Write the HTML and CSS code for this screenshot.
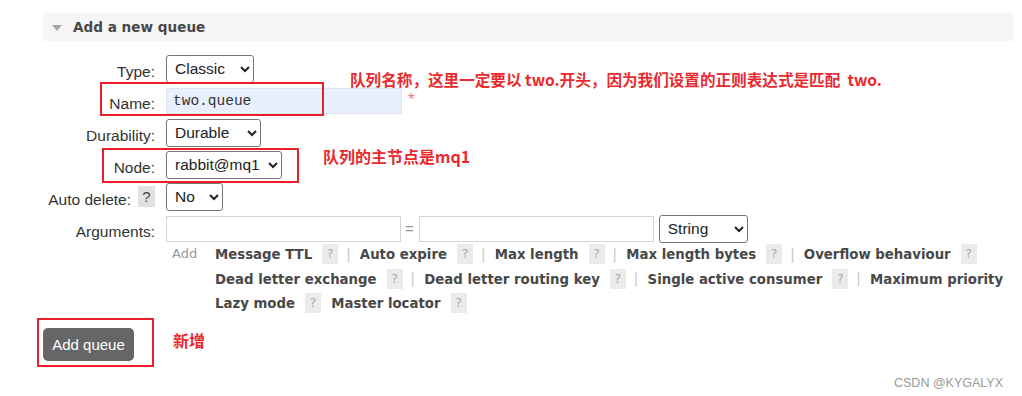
FILE: index.html
```html
<!DOCTYPE html>
<html lang="en">
<head>
    <meta charset="UTF-8">
    <meta name="viewport" content="width=device-width, initial-scale=1.0">
    <title>Add a new queue</title>
    <link rel="stylesheet" href="styles.css">
</head>
<body>

<div class="section">
    <div class="section-head"><span class="toggle"></span>Add a new queue</div>

    <form class="queue-form">
        <div class="row">
            <label class="label" for="type">Type:</label>
            <select id="type" class="select type-select"><option>Classic</option></select>
        </div>

        <div class="row">
            <label class="label" for="name">Name:</label>
            <input type="text" id="name" class="text-input name-input" value="two.queue">
            <span class="required">*</span>
            <span class="mark name-mark"></span>
            <span class="note name-note">队列名称，这里一定要以 two.开头，因为我们设置的正则表达式是匹配&nbsp; two.</span>
        </div>

        <div class="row">
            <label class="label" for="durability">Durability:</label>
            <select id="durability" class="select durability-select"><option>Durable</option></select>
        </div>

        <div class="row">
            <label class="label" for="node">Node:</label>
            <select id="node" class="select node-select"><option>rabbit@mq1</option></select>
            <span class="mark node-mark"></span>
            <span class="note node-note">队列的主节点是mq1</span>
        </div>

        <div class="row">
            <label class="label" for="autodelete">Auto delete: <span class="help dark">?</span></label>
            <select id="autodelete" class="select no-select"><option>No</option></select>
        </div>

        <div class="row">
            <label class="label" for="argkey">Arguments:</label>
            <input type="text" id="argkey" class="text-input arg-input">
            <span class="equals">=</span>
            <input type="text" class="text-input arg-input">
            <select class="select string-select"><option>String</option></select>
        </div>

        <div class="add-row">
            <span class="add-word">Add</span>
            <div class="arg-links">
                <div class="link-line">
                    <span class="arg">Message TTL</span><span class="help">?</span><span class="sep">|</span>
                    <span class="arg">Auto expire</span><span class="help">?</span><span class="sep">|</span>
                    <span class="arg">Max length</span><span class="help">?</span><span class="sep">|</span>
                    <span class="arg">Max length bytes</span><span class="help">?</span><span class="sep">|</span>
                    <span class="arg">Overflow behaviour</span><span class="help">?</span>
                </div>
                <div class="link-line">
                    <span class="arg">Dead letter exchange</span><span class="help">?</span><span class="sep">|</span>
                    <span class="arg">Dead letter routing key</span><span class="help">?</span><span class="sep">|</span>
                    <span class="arg">Single active consumer</span><span class="help">?</span><span class="sep">|</span>
                    <span class="arg">Maximum priority</span>
                </div>
                <div class="link-line">
                    <span class="arg">Lazy mode</span><span class="help">?</span>
                    <span class="arg gap">Master locator</span><span class="help">?</span>
                </div>
            </div>
        </div>

        <div class="submit-row">
            <button type="button" class="add-btn">Add queue</button>
            <span class="mark btn-mark"></span>
            <span class="note btn-note">新增</span>
        </div>
    </form>
</div>

<div class="watermark">CSDN @KYGALYX</div>

</body>
</html>
```

FILE: styles.css
```css
body {
    margin: 0;
    font-family: "Liberation Sans", Arial, sans-serif;
    color: #333;
    background: #fff;
}
.section {
    margin: 13px 8px 0 43px;
}
.section-head {
    height: 28px;
    background: #f6f6f6;
    display: flex;
    align-items: center;
    padding-left: 9px;
    font-family: "DejaVu Sans", Verdana, sans-serif;
    font-weight: bold;
    font-size: 13.6px;
    color: #484848;
}
.toggle {
    width: 0;
    height: 0;
    border-left: 5px solid transparent;
    border-right: 5px solid transparent;
    border-top: 6px solid #a5a5a5;
    margin-right: 11px;
    margin-top: 1px;
}
.queue-form {
    margin-top: 14px;
    display: flex;
    flex-direction: column;
    gap: 5px;
}
.row {
    position: relative;
    display: flex;
    align-items: center;
    height: 27px;
}
.label {
    width: 112px;
    margin-right: 11px;
    text-align: right;
    font-size: 15.5px;
    color: #333;
    padding-top: 6px;
    display: flex;
    justify-content: flex-end;
    align-items: center;
    white-space: nowrap;
}
.select {
    height: 28px;
    font-family: "Liberation Sans", Arial, sans-serif;
    font-size: 15.5px;
    color: #222;
    background: #fff;
    border: 1px solid #767676;
    border-radius: 3px;
    padding: 0 2px 0 4px;
}
.type-select { width: 88px; }
.durability-select { width: 95px; }
.node-select { width: 116px; }
.no-select { width: 57px; }
.string-select { width: 89px; margin-left: 5px; }
.text-input {
    box-sizing: border-box;
    height: 26px;
    width: 235px;
    border: 1px solid #d4d4d4;
    padding: 0 6px;
    font-size: 14.5px;
}
.name-input {
    width: 236px;
    background: #e8f0fe;
    border-color: #dfe4ec;
    font-family: "Liberation Mono", "Courier New", monospace;
    color: #333;
}
.required {
    color: #f77;
    font-size: 17px;
    margin-left: 6px;
    margin-top: -2px;
}
.equals {
    color: #999;
    font-size: 15px;
    margin: 0 5px 0 4px;
}
.help {
    display: inline-block;
    width: 16px;
    height: 20px;
    line-height: 20px;
    text-align: center;
    background: #ebebeb;
    color: #aaa;
    font-family: "DejaVu Sans", Verdana, sans-serif;
    font-weight: normal;
    font-size: 12.5px;
    margin-left: 10px;
    vertical-align: middle;
}
.help.dark {
    width: 17px;
    height: 21px;
    line-height: 21px;
    background: #e2e2e2;
    color: #444;
    font-family: "Liberation Sans", Arial, sans-serif;
    font-size: 15px;
    margin-left: 7px;
    margin-top: -6px;
}
.add-row {
    display: flex;
    margin-left: 129px;
    margin-top: -3px;
}
.add-word {
    width: 43px;
    font-family: "DejaVu Sans", Verdana, sans-serif;
    font-size: 13px;
    color: #999;
    line-height: 20px;
}
.link-line {
    white-space: nowrap;
    height: 24.5px;
    font-family: "DejaVu Sans", Verdana, sans-serif;
    font-size: 13.3px;
    color: #484848;
}
.arg {
    font-weight: bold;
    vertical-align: middle;
}
.arg.gap {
    margin-left: 6px;
}
.sep {
    color: #c4c4c4;
    margin: 0 5px 0 8px;
    vertical-align: middle;
}
.submit-row {
    position: relative;
    margin-top: 5px;
}
.add-btn {
    width: 91px;
    height: 33px;
    background: #666;
    color: #fff;
    border: none;
    border-radius: 5px;
    font-family: "Liberation Sans", Arial, sans-serif;
    font-size: 15px;
    padding: 0;
}
.mark {
    position: absolute;
    border: 2px solid #ea1f27;
    box-sizing: border-box;
}
.name-mark { left: 57px; top: -5px; width: 224px; height: 34px; }
.node-mark { left: 59px; top: -3px; width: 197px; height: 35px; }
.btn-mark { left: -6px; top: -10px; width: 117px; height: 49px; }
.note {
    position: absolute;
    color: #ea2a2e;
    font-family: "Noto Sans CJK SC", "Noto Sans", sans-serif;
    font-weight: bold;
    font-size: 16px;
    white-space: nowrap;
    line-height: 22px;
}
.name-note { left: 307px; top: -19px; font-size: 15.6px; }
.node-note { left: 280px; top: -6px; }
.btn-note { left: 130px; top: 1px; }
.watermark {
    text-align: right;
    padding-right: 19px;
    margin-top: 15px;
    font-size: 12.5px;
    color: #9a9a9a;
}
```
